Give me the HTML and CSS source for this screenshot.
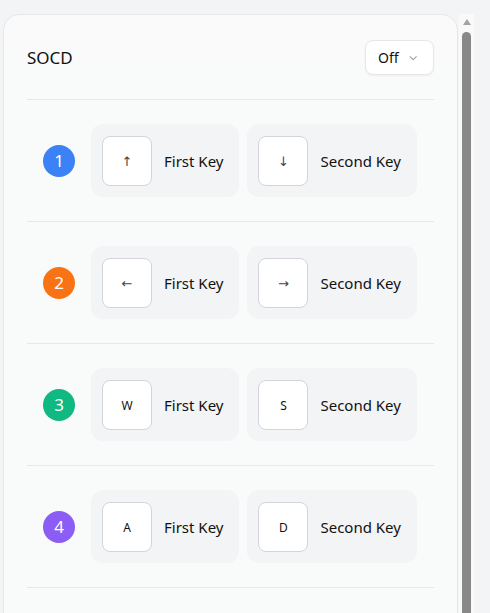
FILE: index.html
```html
<!DOCTYPE html>
<html>
<head>
<meta charset="utf-8">
<link rel="stylesheet" href="styles.css">
</head>
<body>
<div class="frame">
  <div class="card">
    <div class="header">
      <span class="title">SOCD</span>
      <div class="select">
        <span>Off</span>
        <svg class="chev" width="10" height="6" viewBox="0 0 10 6"><path d="M1 1l4 4 4-4" fill="none" stroke="#9ca3af" stroke-width="1.2"/></svg>
      </div>
    </div>
    <div class="row">
      <span class="badge b1">1</span>
      <div class="pill"><span class="cap arrow">↑</span><span class="label">First Key</span></div>
      <div class="pill"><span class="cap arrow">↓</span><span class="label">Second Key</span></div>
    </div>
    <div class="row">
      <span class="badge b2">2</span>
      <div class="pill"><span class="cap arrow">←</span><span class="label">First Key</span></div>
      <div class="pill"><span class="cap arrow">→</span><span class="label">Second Key</span></div>
    </div>
    <div class="row">
      <span class="badge b3">3</span>
      <div class="pill"><span class="cap">W</span><span class="label">First Key</span></div>
      <div class="pill"><span class="cap">S</span><span class="label">Second Key</span></div>
    </div>
    <div class="row">
      <span class="badge b4">4</span>
      <div class="pill"><span class="cap">A</span><span class="label">First Key</span></div>
      <div class="pill"><span class="cap">D</span><span class="label">Second Key</span></div>
    </div>
    <div class="row row-more"></div>
  </div>
  <div class="scrollbar">
    <div class="sb-arrow"></div>
    <div class="sb-thumb"></div>
  </div>
</div>
</body>
</html>
```
FILE: styles.css
```css
* { box-sizing: border-box; }
html, body { margin: 0; padding: 0; }
body {
  background: #f3f4f6;
  font-family: "Noto Sans", "Open Sans", sans-serif;
  color: #111827;
  height: 613px;
  overflow: hidden;
}
.frame {
  display: flex;
  align-items: flex-start;
  gap: 1px;
  padding: 14px 0 0 3px;
  height: 613px;
  overflow: hidden;
}
.card {
  width: 455px;
  flex: none;
  background: linear-gradient(#fafafa, #f9fafa 60%, #f9fafb);
  border: 1px solid #e5e7eb;
  border-radius: 16px;
  padding: 24px 23px 24px 23px;
}
.header {
  display: flex;
  align-items: center;
  justify-content: space-between;
  height: 60px;
  padding-bottom: 24px;
}
.title {
  font-size: 17px;
  color: #111;
}
.select {
  display: flex;
  align-items: center;
  gap: 10px;
  height: 35px;
  width: 69px;
  padding: 0 16px 0 12px;
  background: #fff;
  border: 1px solid #e5e7eb;
  border-radius: 8px;
  box-shadow: 0 1px 2px rgba(0,0,0,0.05);
  font-size: 14px;
  color: #111;
}
.chev { margin-top: 1px; }
.row {
  display: flex;
  align-items: center;
  gap: 16px;
  padding: 24px 16px;
  border-top: 1px solid #e5e7eb;
}
.row .pill + .pill { margin-left: -8px; }
.row-more { height: 80px; }
.badge {
  width: 32px;
  height: 32px;
  flex: none;
  border-radius: 50%;
  color: #fff;
  font-size: 17px;
  display: flex;
  align-items: center;
  justify-content: center;
}
.b1 { background: #3b82f6; }
.b2 { background: #f97316; }
.b3 { background: #10b981; }
.b4 { background: #8b5cf6; }
.pill {
  display: flex;
  align-items: center;
  gap: 12px;
  padding: 12px 16px 11px 11px;
  background: #f3f4f6;
  border-radius: 12px;
}
.cap {
  width: 50px;
  height: 50px;
  flex: none;
  display: flex;
  align-items: center;
  justify-content: center;
  background: #fff;
  border: 1px solid #d1d5db;
  border-radius: 8px;
  font-size: 12px;
  color: #111;
}
.cap.arrow {
  font-family: "DejaVu Sans", sans-serif;
  font-size: 13px;
  color: #444;
}
.label {
  font-size: 15px;
  color: #111;
  white-space: nowrap;
}
.scrollbar {
  width: 15px;
  flex: none;
  height: 600px;
  background: #f9f9f9;
  display: flex;
  flex-direction: column;
  align-items: center;
  padding-top: 5px;
}
.sb-arrow {
  width: 0;
  height: 0;
  border-left: 4.5px solid transparent;
  border-right: 4.5px solid transparent;
  border-bottom: 6px solid #a3a3a3;
}
.sb-thumb {
  margin-top: 7px;
  width: 9px;
  flex: 1;
  background: #888;
  border-radius: 4.5px 4.5px 0 0;
}
```
